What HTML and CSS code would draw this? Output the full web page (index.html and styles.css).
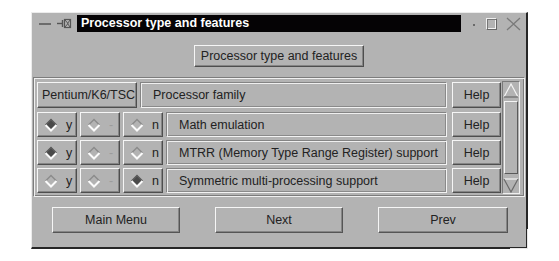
FILE: index.html
```html
<!DOCTYPE html>
<html>
<head>
<meta charset="utf-8">
<link rel="stylesheet" href="styles.css">
</head>
<body>
<div class="win">
  <div class="titlebar">
    <svg class="ico-min" width="12" height="4" viewBox="0 0 12 4"><line x1="0" y1="2" x2="12" y2="2" stroke="#5a5a5a" stroke-width="1.6"/></svg>
    <svg class="ico-pin" width="15" height="11" viewBox="0 0 15 11"><line x1="0" y1="5.5" x2="5" y2="5.5" stroke="#555" stroke-width="1.4"/><line x1="5.5" y1="2" x2="5.5" y2="9" stroke="#555" stroke-width="1.4"/><rect x="7.5" y="1.5" width="6" height="8" fill="none" stroke="#555" stroke-width="1.2"/><path d="M8 2 L11 5.5 L8 9 M13 2 L10.5 5.5 L13 9" fill="none" stroke="#555" stroke-width="1"/></svg>
    <div class="title">Processor type and features</div>
    <span class="dot"></span>
    <span class="sq"></span>
    <svg class="ico-x" width="15" height="14" viewBox="0 0 15 14"><path d="M1 1 L14 13 M14 1 L1 13" stroke="#7a7a7a" stroke-width="1.3" fill="none"/></svg>
  </div>
  <div class="topbar"><div class="btn topbtn">Processor type and features</div></div>
  <div class="group">
    <div class="rows">
      <div class="row first">
        <div class="btn tab">Pentium/K6/TSC</div>
        <div class="field fam">Processor family</div>
        <div class="btn help">Help</div>
      </div>
      <div class="row">
        <div class="btn radio"><svg class="dia" width="14" height="14" viewBox="0 0 14 14"><polygon points="7,1 13,7 7,13 1,7" fill="#4a4a4a"/><path d="M1.5 7 L7 1.5 L12.5 7" fill="none" stroke="#5e5e5e" stroke-width="1.5"/><path d="M1.5 7 L7 12.5 L12.5 7" fill="none" stroke="#fbfbfb" stroke-width="2"/></svg><span>y</span></div>
        <div class="btn radio dis"><svg class="dia" width="14" height="14" viewBox="0 0 14 14"><path d="M1.5 7 L7 1.5 L12.5 7" fill="none" stroke="#8c8c8c" stroke-width="1.5"/><path d="M1.5 7 L7 12.5 L12.5 7" fill="none" stroke="#fbfbfb" stroke-width="2"/></svg><span>-</span></div>
        <div class="btn radio"><svg class="dia" width="14" height="14" viewBox="0 0 14 14"><path d="M1.5 7 L7 1.5 L12.5 7" fill="none" stroke="#8c8c8c" stroke-width="1.5"/><path d="M1.5 7 L7 12.5 L12.5 7" fill="none" stroke="#fbfbfb" stroke-width="2"/></svg><span>n</span></div>
        <div class="field">Math emulation</div>
        <div class="btn help">Help</div>
      </div>
      <div class="row">
        <div class="btn radio"><svg class="dia" width="14" height="14" viewBox="0 0 14 14"><polygon points="7,1 13,7 7,13 1,7" fill="#4a4a4a"/><path d="M1.5 7 L7 1.5 L12.5 7" fill="none" stroke="#5e5e5e" stroke-width="1.5"/><path d="M1.5 7 L7 12.5 L12.5 7" fill="none" stroke="#fbfbfb" stroke-width="2"/></svg><span>y</span></div>
        <div class="btn radio dis"><svg class="dia" width="14" height="14" viewBox="0 0 14 14"><path d="M1.5 7 L7 1.5 L12.5 7" fill="none" stroke="#8c8c8c" stroke-width="1.5"/><path d="M1.5 7 L7 12.5 L12.5 7" fill="none" stroke="#fbfbfb" stroke-width="2"/></svg><span>-</span></div>
        <div class="btn radio"><svg class="dia" width="14" height="14" viewBox="0 0 14 14"><path d="M1.5 7 L7 1.5 L12.5 7" fill="none" stroke="#8c8c8c" stroke-width="1.5"/><path d="M1.5 7 L7 12.5 L12.5 7" fill="none" stroke="#fbfbfb" stroke-width="2"/></svg><span>n</span></div>
        <div class="field">MTRR (Memory Type Range Register) support</div>
        <div class="btn help">Help</div>
      </div>
      <div class="row">
        <div class="btn radio"><svg class="dia" width="14" height="14" viewBox="0 0 14 14"><path d="M1.5 7 L7 1.5 L12.5 7" fill="none" stroke="#8c8c8c" stroke-width="1.5"/><path d="M1.5 7 L7 12.5 L12.5 7" fill="none" stroke="#fbfbfb" stroke-width="2"/></svg><span>y</span></div>
        <div class="btn radio dis"><svg class="dia" width="14" height="14" viewBox="0 0 14 14"><path d="M1.5 7 L7 1.5 L12.5 7" fill="none" stroke="#8c8c8c" stroke-width="1.5"/><path d="M1.5 7 L7 12.5 L12.5 7" fill="none" stroke="#fbfbfb" stroke-width="2"/></svg><span>-</span></div>
        <div class="btn radio"><svg class="dia" width="14" height="14" viewBox="0 0 14 14"><polygon points="7,1 13,7 7,13 1,7" fill="#4a4a4a"/><path d="M1.5 7 L7 1.5 L12.5 7" fill="none" stroke="#5e5e5e" stroke-width="1.5"/><path d="M1.5 7 L7 12.5 L12.5 7" fill="none" stroke="#fbfbfb" stroke-width="2"/></svg><span>n</span></div>
        <div class="field">Symmetric multi-processing support</div>
        <div class="btn help">Help</div>
      </div>
    </div>
    <div class="scroll">
      <svg class="arrow" width="16" height="15" viewBox="0 0 16 15"><polygon points="8,1 15,14 1,14" fill="#b3b3b3"/><path d="M1 14 L8 1 L15 14" fill="none" stroke="#f4f4f4" stroke-width="1.2"/><path d="M1 14 L15 14" stroke="#6a6a6a" stroke-width="1.2"/></svg>
      <div class="thumb"></div>
      <svg class="arrow" width="16" height="15" viewBox="0 0 16 15"><polygon points="1,1 15,1 8,14" fill="#b3b3b3"/><path d="M1 1 L15 1" stroke="#f4f4f4" stroke-width="1.2"/><path d="M1 1 L8 14 L15 1" fill="none" stroke="#6a6a6a" stroke-width="1.2"/></svg>
    </div>
  </div>
  <div class="bottom">
    <div class="btn big">Main Menu</div>
    <div class="btn big">Next</div>
    <div class="btn big prev">Prev</div>
  </div>
  <div class="corner"></div>
</div>
</body>
</html>
```

FILE: styles.css
```css
html, body {
  margin: 0;
  padding: 0;
  background: #ffffff;
}
body {
  font-family: "Liberation Sans", Arial, sans-serif;
  font-size: 12.5px;
  color: #222222;
}
.win {
  position: relative;
  margin: 12px 0 0 31px;
  width: 497px;
  height: 237px;
  box-sizing: border-box;
  background: #b3b3b3;
  border-top: 1px solid #ececec;
  border-left: 1px solid #ececec;
  border-right: 2px solid #262626;
  border-bottom: 2px solid #262626;
}
.titlebar {
  display: flex;
  align-items: center;
  height: 17px;
  margin-top: 2px;
}
.ico-min {
  margin-left: 7px;
}
.ico-pin {
  margin-left: 6px;
}
.title {
  margin-left: 5px;
  width: 384px;
  height: 17px;
  box-sizing: border-box;
  background: #050305;
  color: #ffffff;
  font-weight: bold;
  font-size: 12.5px;
  line-height: 17px;
  padding-left: 4px;
}
.dot {
  width: 2px;
  height: 2px;
  background: #6a6a6a;
  margin-left: 12px;
  margin-top: 2px;
}
.sq {
  width: 9px;
  height: 10px;
  margin-left: 11px;
  border-top: 1px solid #efefef;
  border-left: 1px solid #efefef;
  border-right: 1px solid #666;
  border-bottom: 1px solid #666;
  box-shadow: inset 1px 1px #777, inset -1px -1px #f0f0f0;
}
.ico-x {
  margin-left: 9px;
}
.btn {
  box-sizing: border-box;
  background: #b3b3b3;
  border: 1px solid;
  border-color: #f6f6f6 #4e4e4e #4e4e4e #f6f6f6;
  box-shadow: inset -1px -1px #858585;
  display: flex;
  align-items: center;
  justify-content: center;
}
.topbar {
  display: flex;
  justify-content: center;
  margin-top: 13px;
}
.topbtn {
  width: 170px;
  height: 22px;
  padding-bottom: 1px;
}
.group {
  display: flex;
  margin: 10px 0 0 1px;
  width: 492px;
  height: 120px;
  box-sizing: border-box;
  border: 1px solid;
  border-color: #7c7c7c #f0f0f0 #f0f0f0 #7c7c7c;
  box-shadow: inset 1px 1px #f0f0f0, inset -1px -1px #7c7c7c;
  padding: 3px 0 0 3px;
}
.rows {
  display: flex;
  flex-direction: column;
  gap: 3px;
  width: 464px;
  padding-top: 1px;
}
.row {
  display: flex;
  height: 25px;
  gap: 3px;
}
.row.first {
  height: 26px;
  margin-bottom: 1px;
}
.tab {
  width: 100px;
  justify-content: flex-start;
  padding-left: 4px;
}
.field {
  box-sizing: border-box;
  flex: 0 0 281px;
  display: flex;
  align-items: center;
  padding-left: 12px;
  border: 1px solid;
  border-color: #848484 #f2f2f2 #f2f2f2 #848484;
  box-shadow: inset 1px 1px #efefef, inset -1px -1px #8a8a8a;
}
.field.fam {
  flex-basis: 307px;
}
.help {
  width: 49px;
  margin-left: 2px;
}
.radio {
  width: 40px;
  justify-content: flex-start;
  padding-left: 6px;
}
.radio span {
  margin-left: 8px;
}
.radio.dis span {
  color: #9c9c9c;
}
.scroll {
  box-sizing: border-box;
  width: 18px;
  height: 113px;
  margin-left: 1px;
  border: 1px solid;
  border-color: #7a7a7a #f0f0f0 #f0f0f0 #7a7a7a;
  display: flex;
  flex-direction: column;
  align-items: center;
  padding-top: 1px;
}
.thumb {
  box-sizing: border-box;
  width: 14px;
  height: 73px;
  margin: 3px 0 4px;
  border: 1px solid;
  border-color: #f4f4f4 #5a5a5a #5a5a5a #f4f4f4;
}
.bottom {
  display: flex;
  margin: 10px 0 0 20px;
  gap: 35px;
}
.big {
  width: 128px;
  height: 26px;
  border-color: #f6f6f6 #555 #555 #f6f6f6;
  box-shadow: inset -1px -1px #858585;
}
.big.prev {
  width: 130px;
}
.corner {
  position: absolute;
  right: -2px;
  bottom: -2px;
  width: 17px;
  height: 19px;
  border-right: 1px solid #e8e8e8;
  border-bottom: 1px solid #e8e8e8;
}
```
